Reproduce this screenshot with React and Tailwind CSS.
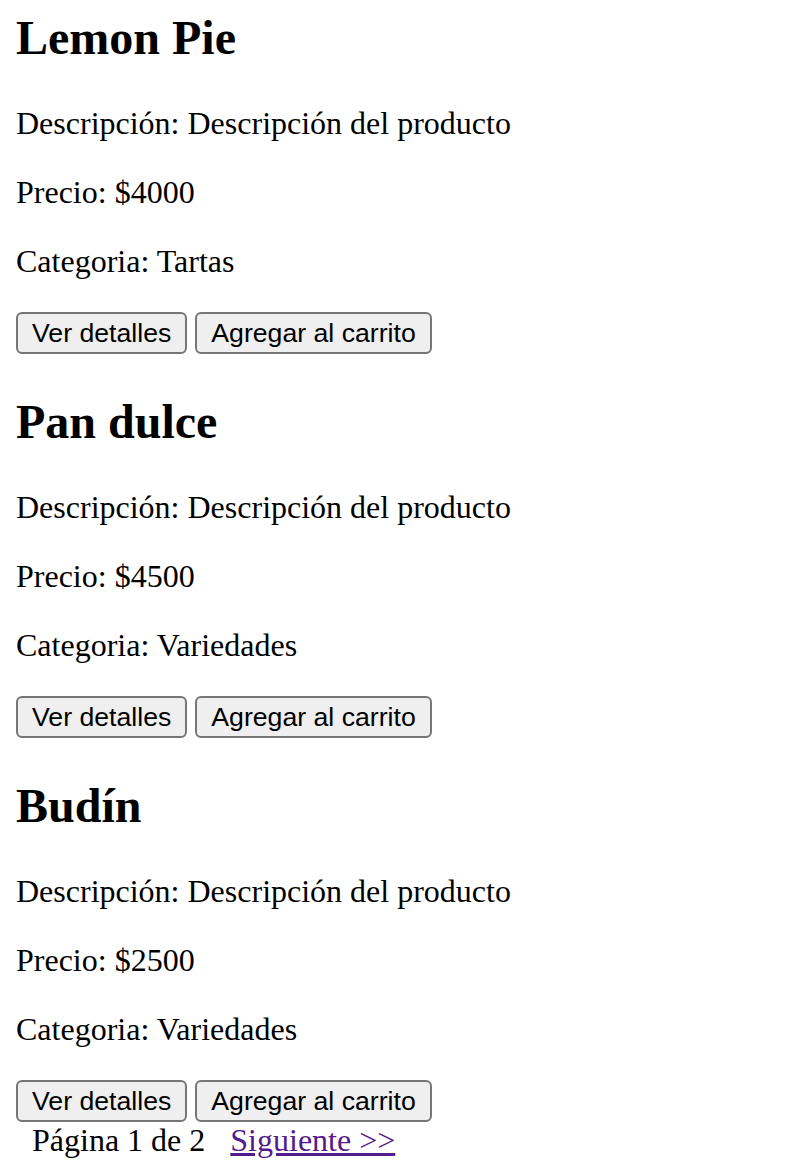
import React from "react";

const productos = [
  { nombre: "Lemon Pie", precio: 4000, categoria: "Tartas" },
  { nombre: "Pan dulce", precio: 4500, categoria: "Variedades" },
  { nombre: "Budín", precio: 2500, categoria: "Variedades" },
];

const Producto = ({ producto, first }) => {
  return (
    <div>
      <h2
        className={`text-[48px] font-bold leading-[55px] mb-10 ${
          first ? "mt-0" : "mt-10"
        }`}
      >
        {producto.nombre}
      </h2>
      <p className="text-[32px] leading-[37px] mb-8">
        Descripción: Descripción del producto
      </p>
      <p className="text-[32px] leading-[37px] mb-8">Precio: ${producto.precio}</p>
      <p className="text-[32px] leading-[37px] mb-8">Categoria: {producto.categoria}</p>
      <div className="flex gap-2">
        <button className="h-[42px] px-[14px] bg-[#efefef] border-2 border-[#767676] rounded-[6px] font-['Liberation_Sans',Arial,sans-serif] text-[26.67px] leading-[30px] text-black">
          Ver detalles
        </button>
        <button className="h-[42px] px-[14px] bg-[#efefef] border-2 border-[#767676] rounded-[6px] font-['Liberation_Sans',Arial,sans-serif] text-[26.67px] leading-[30px] text-black">
          Agregar al carrito
        </button>
      </div>
    </div>
  );
};

const App = () => {
  return (
    <div className="min-h-screen bg-white px-4 pt-[10px] font-['Liberation_Serif','Times_New_Roman',serif] text-black">
      {productos.map((p, i) => (
        <Producto key={p.nombre} producto={p} first={i === 0} />
      ))}
      {/* paginacion */}
      <div className="flex gap-[25px] pl-4 text-[32px] leading-[37px]">
        <span>Página 1 de 2</span>
        <a href="#" className="text-[#551a8b] underline">
          Siguiente &gt;&gt;
        </a>
      </div>
    </div>
  );
};

export default App;
